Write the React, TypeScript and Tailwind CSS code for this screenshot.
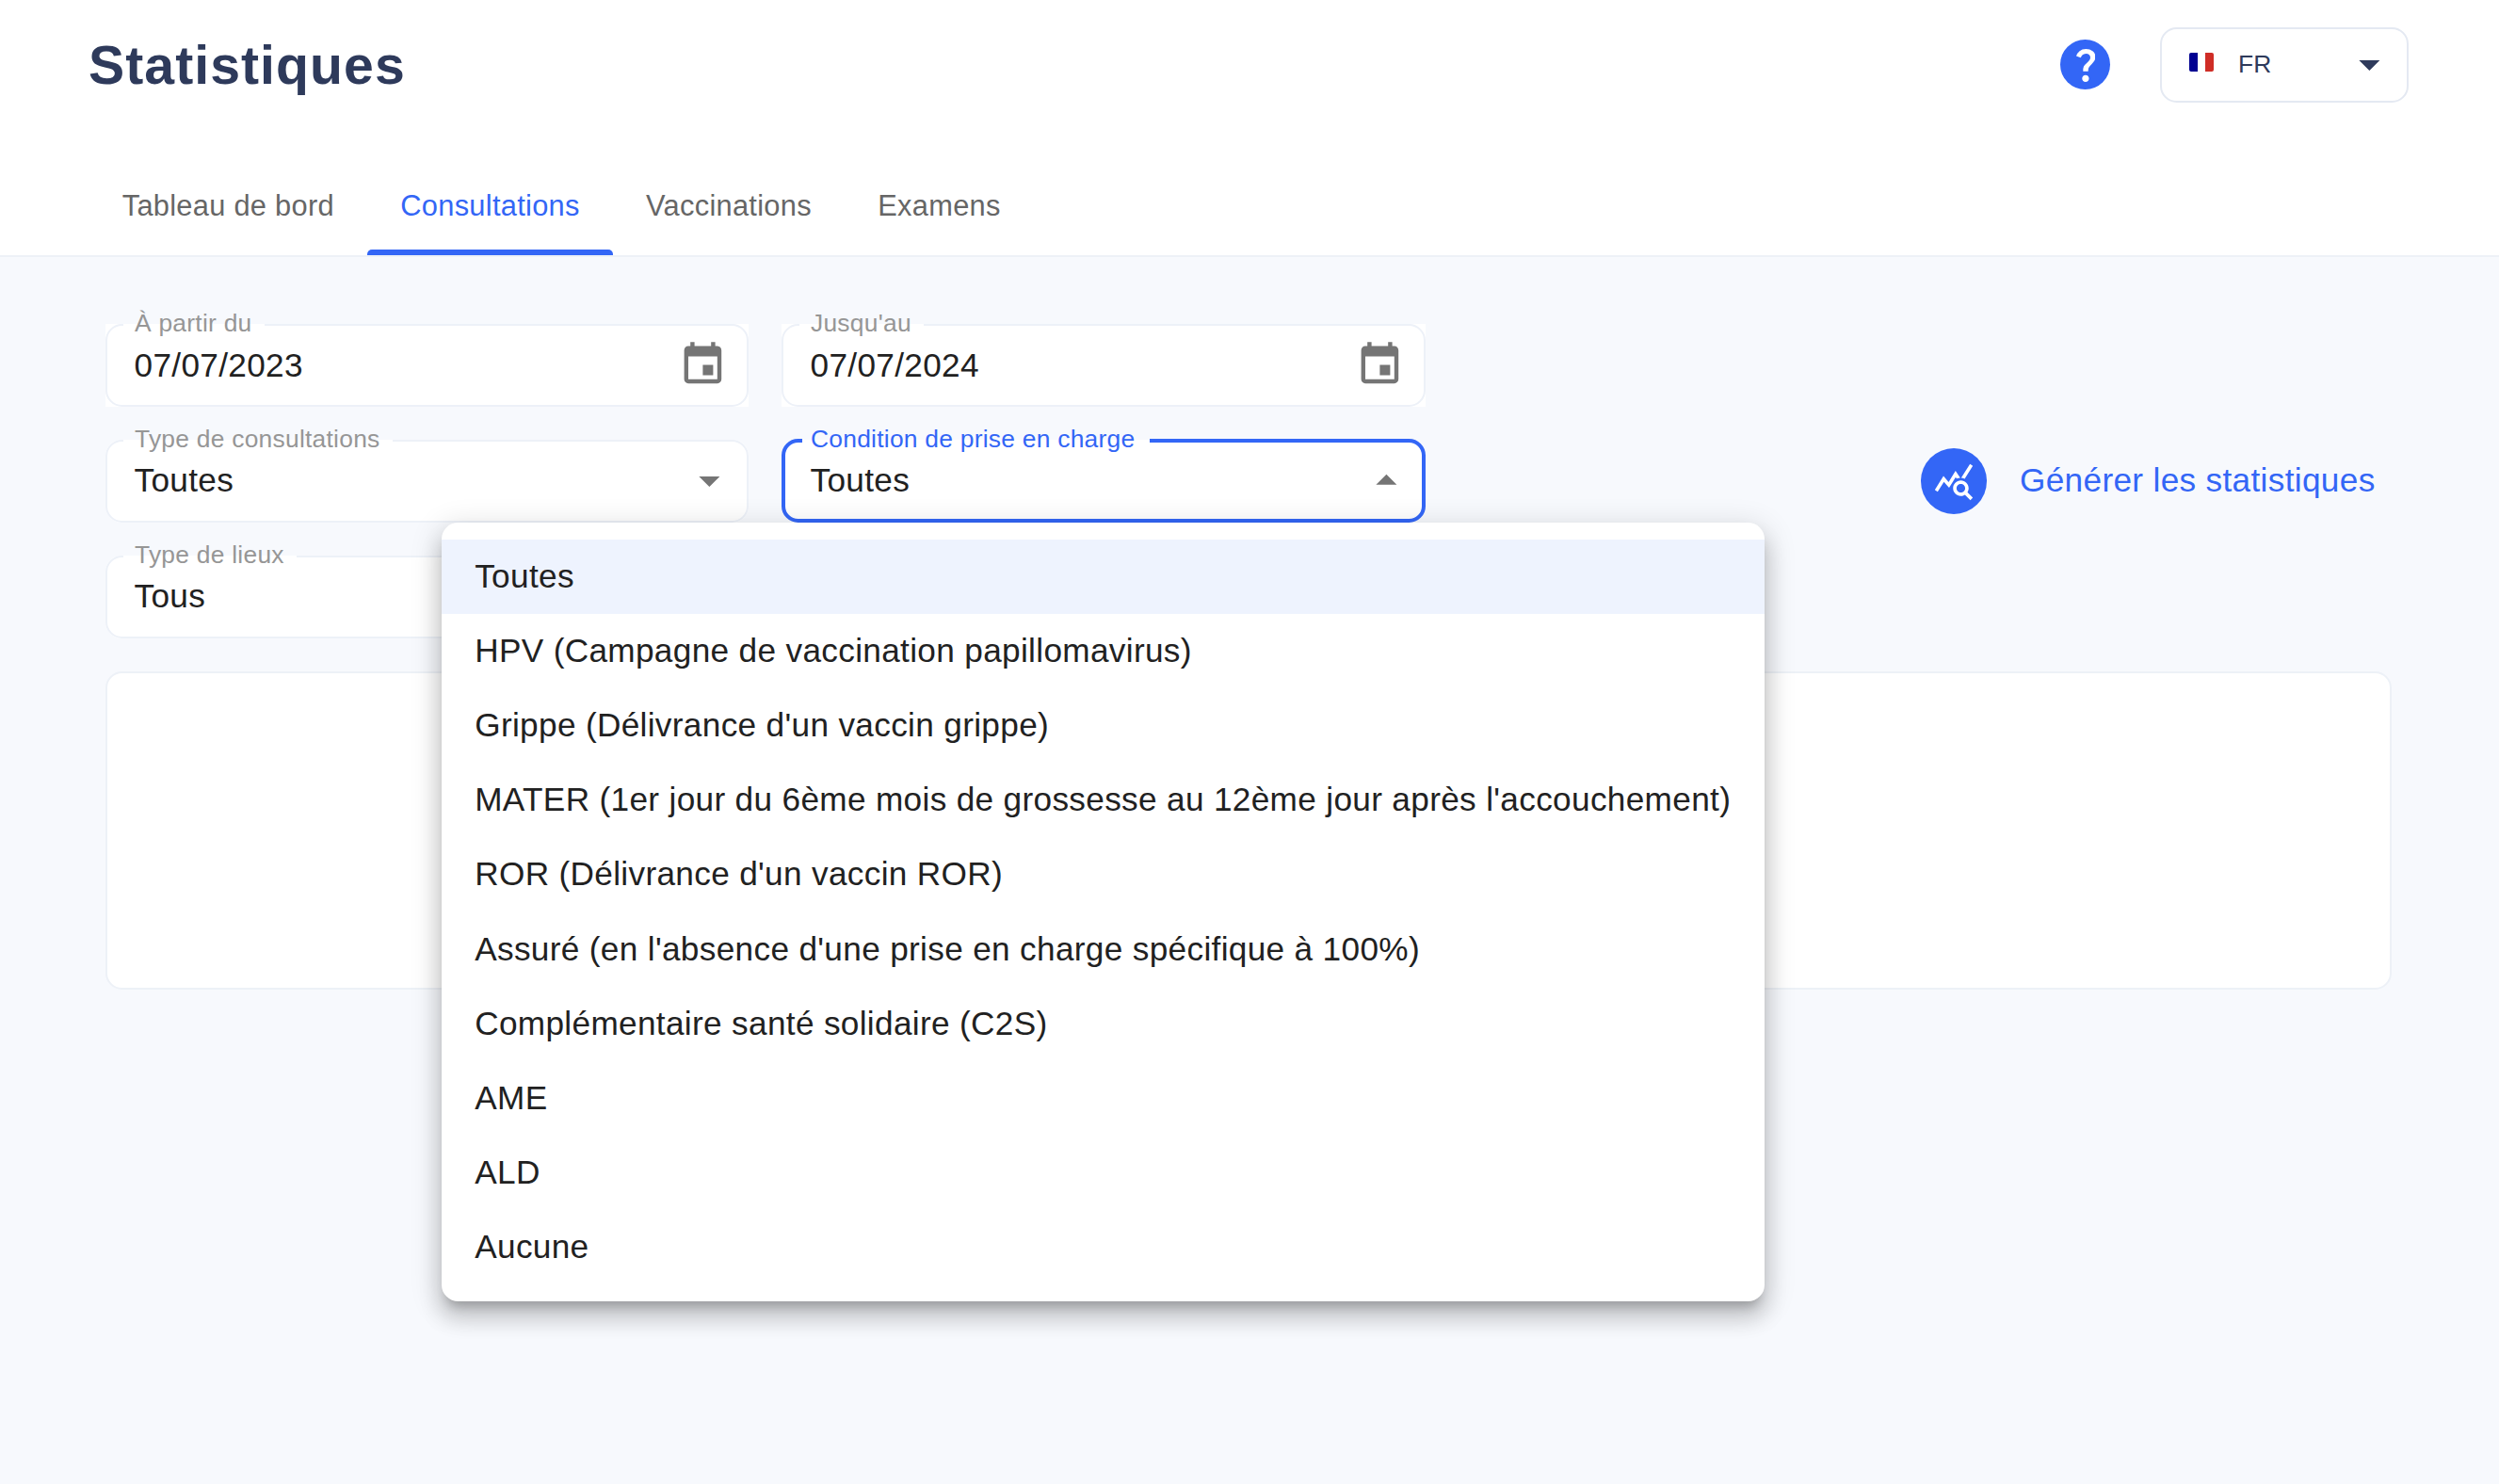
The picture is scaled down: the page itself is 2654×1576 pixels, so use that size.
import type { ReactNode } from 'react';

const tabs = ['Tableau de bord', 'Consultations', 'Vaccinations', 'Examens'];

const conditions = [
    'Toutes',
    'HPV (Campagne de vaccination papillomavirus)',
    "Grippe (Délivrance d'un vaccin grippe)",
    "MATER (1er jour du 6ème mois de grossesse au 12ème jour après l'accouchement)",
    "ROR (Délivrance d'un vaccin ROR)",
    "Assuré (en l'absence d'une prise en charge spécifique à 100%)",
    'Complémentaire santé solidaire (C2S)',
    'AME',
    'ALD',
    'Aucune'
];

function Icon({ d, className }: { d: string; className: string }) {
    return (
        <svg viewBox="0 0 24 24" fill="currentColor" className={className}>
            <path d={d} />
        </svg>
    );
}

const ARROW_DOWN = 'M7 10l5 5 5-5z';
const ARROW_UP = 'M7 14l5-5 5 5z';
const CALENDAR =
    'M17 12h-5v5h5v-5zM16 1v2H8V1H6v2H5c-1.11 0-1.99.9-1.99 2L3 19c0 1.1.89 2 2 2h14c1.1 0 2-.9 2-2V5c0-1.1-.9-2-2-2h-1V1h-2zm3 18H5V8h14v11z';
const QUERY_STATS =
    'M19.88 18.47c.44-.7.7-1.51.7-2.39 0-2.49-2.01-4.5-4.5-4.5s-4.5 2.01-4.5 4.5 2.01 4.5 4.49 4.5c.88 0 1.7-.26 2.39-.7L21.58 23 23 21.58l-3.12-3.11zm-3.8.11c-1.38 0-2.5-1.12-2.5-2.5s1.12-2.5 2.5-2.5 2.5 1.12 2.5 2.5-1.12 2.5-2.5 2.5zm-.36-8.5c-.74.02-1.45.18-2.1.45l-.55-.83-3.8 6.18-3.01-3.52-3.63 5.81L1 17l5-8 3 3.5L13 6l2.72 4.08zm2.59.5c-.64-.28-1.33-.45-2.05-.49L21.38 2 23 3.18l-4.69 7.4z';

interface FieldProps {
    label: string;
    value: string;
    type: 'date' | 'select';
    open?: boolean;
    children?: ReactNode;
}

function Field({ label, value, type, open = false, children }: FieldProps) {
    return (
        <div className={`relative h-[88px] bg-white ${type === 'select' ? 'rounded-[17px]' : ''}`}>
            <div className={`flex h-full items-center justify-between pl-[30.5px] ${type === 'select' ? 'pb-[2px]' : ''}`}>
                <span className="text-[35.2px] leading-[40px] tracking-[0.33px] text-[#212121]">{value}</span>
                {type === 'date' ? (
                    <Icon d={CALENDAR} className="mr-[22.7px] mb-[2px] size-[52.8px] text-[#757575]" />
                ) : (
                    <Icon d={open ? ARROW_UP : ARROW_DOWN} className="mr-[15px] size-[52.8px] text-[#757575]" />
                )}
            </div>

            {/* Outline, interrupted by the floating label */}
            <div
                className={`pointer-events-none absolute inset-x-0 bottom-0 rounded-[17.6px] ${
                    open ? '-top-px border-4 border-[#3366f6]' : 'top-0 border-2 border-[#edf1f8]'
                }`}
            />
            <div
                className={`absolute whitespace-nowrap text-[26.4px] leading-[32px] tracking-[0.25px] ${
                    open ? '-top-px left-[22px] h-[4px] pr-[16px] pl-[9px] text-[#3366f6]' : 'top-0 left-[19px] h-[2px] pr-[13px] pl-[12px] text-[#969696]'
                } bg-white`}
            >
                {open && <span className="absolute inset-x-0 top-0 h-px bg-[#f7f9fd]" />}
                <span className={`relative block ${open ? '-top-[16px]' : '-top-[17px]'}`}>{label}</span>
            </div>
            {children}
        </div>
    );
}

function ConditionMenu() {
    return (
        <ul className="absolute top-full -left-[361px] z-10 w-[1405px] rounded-[17.6px] bg-white py-[17.6px] shadow-[0_11px_11px_-6.6px_rgba(0,0,0,0.2),0_17.6px_22px_2.2px_rgba(0,0,0,0.14),0_6.6px_30.8px_4.4px_rgba(0,0,0,0.12)]">
            {conditions.map((condition, i) => (
                <li
                    key={condition}
                    className={`flex h-[79.2px] items-center px-[35.2px] pb-px text-[35.2px] leading-[40px] tracking-[0.33px] whitespace-nowrap text-[#212121] ${
                        i === 0 ? 'bg-[#eef3fe]' : ''
                    }`}
                >
                    {condition}
                </li>
            ))}
        </ul>
    );
}

function Header() {
    return (
        <header className="flex h-[273px] flex-col border-b-2 border-[#edf1f7] bg-white">
            <div className="flex h-[138px] items-start justify-between pr-[96px] pl-[94px]">
                <h1 className="mt-[36px] text-[57.2px] leading-[66px] font-bold tracking-[1.05px] text-[#2e3a5b]">
                    Statistiques
                </h1>
                <div className="mt-[29px] flex items-center gap-[53px]">
                    <button className="mb-px flex size-[53px] items-center justify-center rounded-full bg-[#3366f6] pt-[2px] pl-px">
                        <svg viewBox="342 -720 280 480" fill="white" className="h-[35px] w-[20.4px]">
                            <path d="M478-240q21 0 35.5-14.5T528-290q0-21-14.5-35.5T478-340q-21 0-35.5 14.5T428-290q0 21 14.5 35.5T478-240Zm-36-154h74q0-33 7.5-52t42.5-52q26-26 41-49.5t15-56.5q0-56-41-86t-97-30q-57 0-92.5 30T342-618l66 26q5-18 22.5-39t53.5-21q32 0 48 17.5t16 38.5q0 20-12 37.5T506-526q-44 39-54 59t-10 73Z" />
                        </svg>
                    </button>
                    <button className="flex h-[80px] w-[264px] items-center rounded-[17.6px] border-2 border-[#e4e9f2] pr-[13px] pl-[29px] text-[#2e3a5b]">
                        <span className="mb-[6px] flex h-[20px] w-[26px] justify-between overflow-hidden rounded-[2px]">
                            <span className="w-[8.7px] bg-[#000091]" />
                            <span className="w-[8.7px] bg-[#cf2d26]" />
                        </span>
                        <span className="mb-[2px] ml-[26px] flex-1 text-left text-[26.4px] leading-[32px] tracking-[0.25px]">
                            FR
                        </span>
                        <Icon d={ARROW_DOWN} className="mb-px size-[52.8px]" />
                    </button>
                </div>
            </div>

            <nav className="flex flex-1 pl-[94.5px]">
                {tabs.map((tab) => (
                    <button
                        key={tab}
                        className={`flex flex-col px-[35.2px] text-[30.8px] leading-[36px] tracking-[0.29px] ${
                            tab === 'Consultations' ? 'text-[#3366f6]' : 'text-[#666666]'
                        }`}
                    >
                        <span className="mt-[63px] flex-1">{tab}</span>
                        {tab === 'Consultations' && (
                            <span className="-mx-[35.2px] h-[6px] self-stretch rounded-t-[5px] bg-[#3366f6]" />
                        )}
                    </button>
                ))}
            </nav>
        </header>
    );
}

export default function App() {
    return (
        <div className="h-[1576px] w-[2654px] overflow-hidden bg-[#f7f9fd] font-['Liberation_Sans',Arial,sans-serif]">
            <Header />
            <main className="pt-[71px] pr-[114px] pl-[112px]">
                <div className="flex items-center justify-between">
                    <div className="grid grid-cols-[683px_684px] gap-[35px]">
                        <Field label="À partir du" value="07/07/2023" type="date" />
                        <Field label="Jusqu'au" value="07/07/2024" type="date" />
                        <Field label="Type de consultations" value="Toutes" type="select" />
                        <Field label="Condition de prise en charge" value="Toutes" type="select" open>
                            <ConditionMenu />
                        </Field>
                        <Field label="Type de lieux" value="Tous" type="select" />
                    </div>
                    <button className="flex w-[500px] items-center gap-[35px] text-[#3366f6]">
                        <span className="flex size-[70px] items-center justify-center rounded-full bg-[#3366f6]">
                            <Icon d={QUERY_STATS} className="size-[44px] text-white" />
                        </span>
                        <span className="pb-[2px] text-[35.2px] leading-[40px] tracking-[0.33px] whitespace-nowrap">
                            Générer les statistiques
                        </span>
                    </button>
                </div>
                <section className="mt-[35px] h-[338px] rounded-[17.6px] border-2 border-[#edf1f7] bg-white" />
            </main>
        </div>
    );
}
